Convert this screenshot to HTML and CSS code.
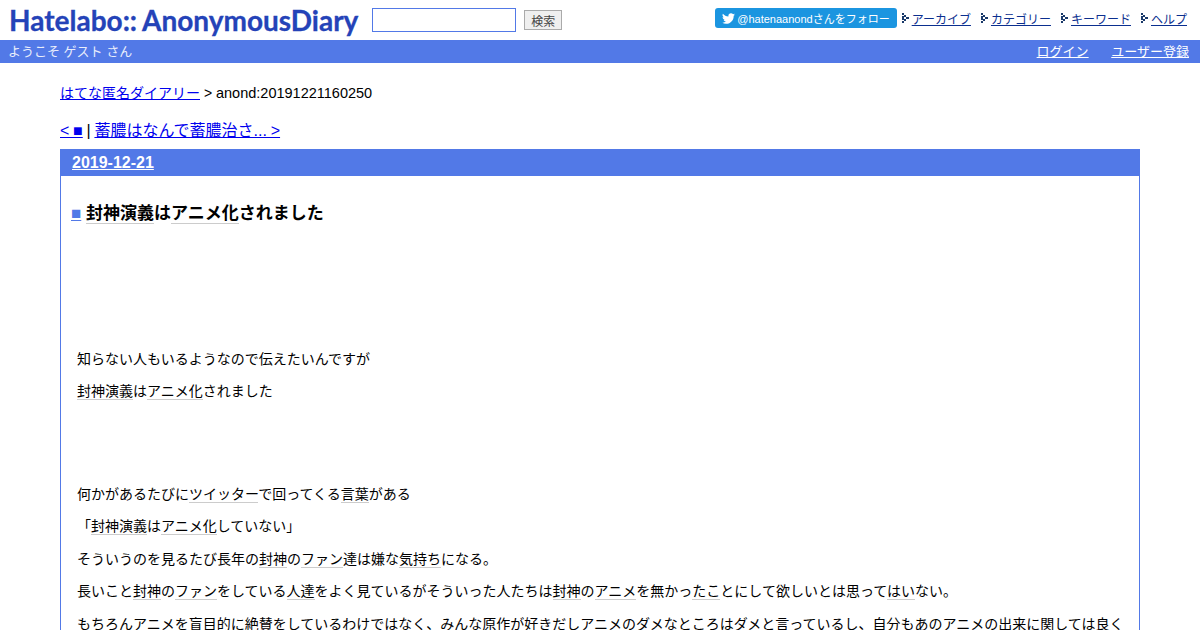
FILE: index.html
```html
<!DOCTYPE html>
<html lang="ja">
<head>
  <meta charset="UTF-8">
  <title>封神演義はアニメ化されました</title>
  <link rel="stylesheet" href="styles.css">
</head>
<body>
  <div id="banner">
    <a class="logo" href="#">Hatelabo<span class="logo-sep">::</span>AnonymousDiary</a>
    <form class="search">
      <input class="search-text" type="text">
      <input class="search-button" type="submit" value="検索">
    </form>
    <ul class="menu">
      <li class="follow">
        <a href="#">
          <svg class="bird" viewBox="0 0 24 24"><path d="M23.95 4.57a10 10 0 0 1-2.82.77 4.96 4.96 0 0 0 2.16-2.72c-.95.55-2 .95-3.12 1.18a4.92 4.92 0 0 0-8.38 4.48C7.69 8.09 4.07 6.13 1.64 3.16a4.82 4.82 0 0 0-.67 2.48c0 1.71.87 3.21 2.19 4.1a4.9 4.9 0 0 1-2.23-.62v.06a4.92 4.92 0 0 0 3.95 4.83 5 5 0 0 1-2.21.08 4.94 4.94 0 0 0 4.6 3.42A9.87 9.87 0 0 1 0 19.54a14 14 0 0 0 7.56 2.21c9.05 0 14-7.5 14-13.98 0-.21 0-.42-.02-.63a9.94 9.94 0 0 0 2.46-2.55z"/></svg>
          @hatenaanondさんをフォロー
        </a>
      </li>
      <li><svg class="arrow" viewBox="0 0 7 10"><path d="M0 0h2v2H0zM2 2h2v2H2zM4 4h3v2H4zM2 6h2v2H2zM0 8h2v2H0zM0 3h2v4H0z"/></svg><a href="#">アーカイブ</a></li>
      <li><svg class="arrow" viewBox="0 0 7 10"><path d="M0 0h2v2H0zM2 2h2v2H2zM4 4h3v2H4zM2 6h2v2H2zM0 8h2v2H0zM0 3h2v4H0z"/></svg><a href="#">カテゴリー</a></li>
      <li><svg class="arrow" viewBox="0 0 7 10"><path d="M0 0h2v2H0zM2 2h2v2H2zM4 4h3v2H4zM2 6h2v2H2zM0 8h2v2H0zM0 3h2v4H0z"/></svg><a href="#">キーワード</a></li>
      <li><svg class="arrow" viewBox="0 0 7 10"><path d="M0 0h2v2H0zM2 2h2v2H2zM4 4h3v2H4zM2 6h2v2H2zM0 8h2v2H0zM0 3h2v4H0z"/></svg><a href="#">ヘルプ</a></li>
    </ul>
  </div>

  <div id="bar">
    <span class="welcome">ようこそ ゲスト さん</span>
    <span class="account">
      <a href="#">ログイン</a>
      <a href="#">ユーザー登録</a>
    </span>
  </div>

  <div id="main">
    <p class="crumbs"><a href="#">はてな匿名ダイアリー</a> &gt; <span class="entry-id">anond:20191221160250</span></p>
    <p class="pager"><a href="#">&lt; ■</a> | <a href="#">蓄膿はなんで蓄膿治さ... &gt;</a></p>

    <div class="day">
      <h2><a href="#">2019-12-21</a></h2>
      <div class="body">
        <h3><a class="sanchor" href="#">■</a><a class="kw" href="#">封神演義</a>は<a class="kw" href="#">アニメ化</a>されました</h3>
        <p class="blank"></p>
        <p class="blank"></p>
        <p class="blank"></p>
        <p>知らない人もいるようなので伝えたいんですが</p>
        <p><a class="kw" href="#">封神演義</a>は<a class="kw" href="#">アニメ化</a>されました</p>
        <p class="blank"></p>
        <p class="blank"></p>
        <p>何かがあるたびに<a class="kw" href="#">ツイッター</a>で回ってくる<a class="kw" href="#">言葉</a>がある</p>
        <p>「<a class="kw" href="#">封神演義</a>は<a class="kw" href="#">アニメ化</a>していない」</p>
        <p>そういうのを見るたび長年の<a class="kw" href="#">封神</a>の<a class="kw" href="#">ファン</a>達は嫌な<a class="kw" href="#">気持ち</a>になる。</p>
        <p>長いこと<a class="kw" href="#">封神</a>の<a class="kw" href="#">ファン</a>をしている<a class="kw" href="#">人達</a>をよく見ているがそういった人たちは<a class="kw" href="#">封神</a>の<a class="kw" href="#">アニメ</a>を無かっ<a class="kw" href="#">たこ</a>とにして欲しいとは思って<a class="kw" href="#">はい</a>ない。</p>
        <p>もちろん<a class="kw" href="#">アニメ</a>を盲目的に絶賛をしているわけではなく、みんな原作が好きだし<a class="kw" href="#">アニメ</a>のダメなところはダメと言っているし、自分もあの<a class="kw" href="#">アニメ</a>の出来に関しては良く</p>
      </div>
    </div>
  </div>
</body>
</html>
```

FILE: styles.css
```css
html, body {
  height: 630px;
  overflow: hidden;
}

body {
  margin: 0;
  font-family: "Liberation Sans", "Noto Sans CJK JP", sans-serif;
  font-size: 14px;
  color: #000;
  background: #fff;
}

/* banner */
#banner {
  display: flex;
  align-items: center;
  height: 40px;
  padding: 0 13px 0 9px;
  box-sizing: border-box;
}

.logo {
  font-family: "Lato", sans-serif;
  font-size: 28px;
  font-weight: 700;
  line-height: 40px;
  color: #2443b8;
  text-decoration: none;
  white-space: nowrap;
  -webkit-text-stroke: 0.3px #2443b8;
}

.logo-sep {
  margin-right: 5px;
}

.search {
  display: flex;
  align-items: center;
  gap: 8px;
  margin-left: 14px;
}

.search-text {
  width: 144px;
  height: 24px;
  padding: 0;
  box-sizing: border-box;
  border: 1px solid #5279e7;
  background: #fff;
}

.search-button {
  width: 38px;
  height: 20px;
  padding: 0;
  font-family: inherit;
  font-size: 12px;
  color: #444;
  background: #efefef;
  border: 1px solid #aaa;
}

.menu {
  display: flex;
  align-items: center;
  margin: 0 0 0 auto;
  padding: 0 0 4px;
  list-style: none;
  font-size: 12px;
}

.menu li {
  display: flex;
  align-items: center;
  margin-left: 10px;
}

.menu a {
  color: #0b2f8f;
}

.menu .follow {
  margin-left: 0;
  margin-right: -5px;
}

.menu .follow a {
  display: flex;
  align-items: center;
  gap: 2px;
  height: 20px;
  padding: 0 7px;
  font-size: 11px;
  color: #fff;
  text-decoration: none;
  background: #1b95e0;
  border-radius: 3px;
}

.bird {
  width: 13px;
  height: 13px;
  fill: #fff;
}

.arrow {
  width: 7px;
  height: 10px;
  margin-right: 3px;
  fill: #1a3a6a;
}

/* welcome bar */
#bar {
  display: flex;
  justify-content: space-between;
  align-items: center;
  height: 23px;
  padding: 0 11px 2px 8px;
  box-sizing: border-box;
  font-size: 13px;
  color: #e8edfb;
  background: #5279e7;
}

.account a {
  margin-left: 19px;
  color: #fff;
}

/* main */
#main {
  padding: 0 60px;
}

.crumbs {
  margin: 22px 0 0;
  line-height: 16px;
}

.entry-id {
  font-size: 14.5px;
}

.pager {
  margin: 20px 0 0;
  font-size: 16px;
  line-height: 20px;
  word-spacing: -0.7px;
}

.crumbs a, .pager a {
  color: #00e;
}

.day {
  margin-top: 8px;
  border: 1px solid #5279e7;
  border-bottom: none;
}

.day h2 {
  margin: 0;
  padding: 0 11px;
  height: 26px;
  font-size: 16px;
  line-height: 26px;
  background: #5279e7;
}

.day h2 a {
  color: #fff;
}

.body {
  padding: 0 10px;
}

.body h3 {
  margin: 27px 0 12.5px;
  font-size: 17px;
  line-height: 22px;
}

.sanchor {
  margin-right: 4.7px;
  font-weight: normal;
  color: #5279e7;
}

.kw {
  color: #000;
  text-decoration: none;
  border-bottom: 1px solid #ccc;
}

.body p {
  margin: 0 0 0 6px;
  padding: 8px 0 8px;
  font-size: 14px;
  line-height: 16.5px;
}

.body p.blank {
  height: 19px;
}
```
